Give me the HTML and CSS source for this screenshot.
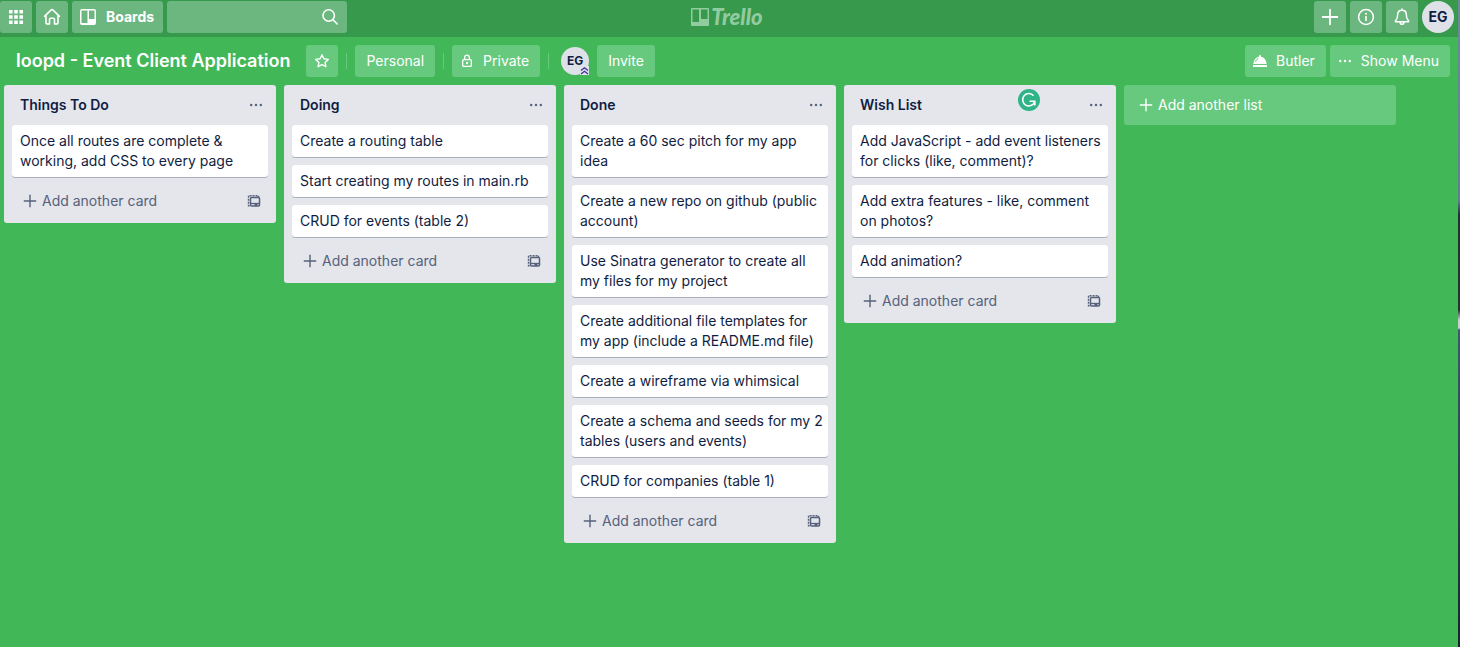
FILE: index.html
```html
<!DOCTYPE html>
<html lang="en">
<head>
<meta charset="utf-8">
<meta name="viewport" content="width=device-width, initial-scale=1">
<title>loopd - Event Client Application | Trello</title>
<link rel="stylesheet" href="styles.css">
</head>
<body>
<svg class="sprite" aria-hidden="true">
  <symbol id="apps" viewBox="0 0 16 16"><path fill="currentColor" d="M1 1h3.600v3.600H1zM6.200 1h3.600v3.600H6.200zM11.400 1H15v3.600h-3.600zM1 6.200h3.600v3.600H1zM6.200 6.200h3.600v3.600H6.200zM11.400 6.200H15v3.600h-3.600zM1 11.400h3.600V15H1zM6.200 11.400h3.600V15H6.200zM11.400 11.400H15V15h-3.600z"/></symbol>
  <symbol id="home" viewBox="0 0 18 18"><path fill="none" stroke="currentColor" stroke-width="1.600" stroke-linejoin="round" stroke-linecap="round" d="M1.500 8.300L8.200 1.900q.8-.7 1.600 0l6.700 6.400M3 7.500v6.700q0 1.800 1.800 1.800h1.700v-4.800q0-1 1-1h3q1 0 1 1V16h1.700q1.800 0 1.800-1.800V7.500"/></symbol>
  <symbol id="board" viewBox="0 0 18 18"><path fill="currentColor" fill-rule="evenodd" d="M3 1h12a2 2 0 0 1 2 2v12a2 2 0 0 1-2 2H3a2 2 0 0 1-2-2V3a2 2 0 0 1 2-2zm-.500 1.500v12.500h6V2.500zm7.500 0v8.500h5.500V2.500z"/></symbol>
  <symbol id="logo" viewBox="0 0 18 18"><path fill="currentColor" fill-rule="evenodd" d="M1 0h16a1 1 0 0 1 1 1v16a1 1 0 0 1-1 1H1a1 1 0 0 1-1-1V1a1 1 0 0 1 1-1zm.500 1.500v12.500h6.500V1.500zm8.500 0v9.500h6.500V1.500z"/></symbol>
  <symbol id="search" viewBox="0 0 18 18"><g fill="none" stroke="currentColor" stroke-width="1.600" stroke-linecap="round"><circle cx="7.700" cy="7.500" r="5.700"/><path d="M12 11.800l4.200 4.200"/></g></symbol>
  <symbol id="plus" viewBox="0 0 16 16"><path fill="none" stroke="currentColor" stroke-width="1.600" stroke-linecap="round" d="M8 1.500v13M1.500 8h13"/></symbol>
  <symbol id="info" viewBox="0 0 18 18"><circle cx="9" cy="9" r="7.400" fill="none" stroke="currentColor" stroke-width="1.500"/><path fill="currentColor" d="M8.200 8h1.600v5H8.200z"/><circle cx="9" cy="5.800" r="1" fill="currentColor"/></symbol>
  <symbol id="bell" viewBox="0 0 18 18"><g fill="none" stroke="currentColor" stroke-width="1.500" stroke-linejoin="round" stroke-linecap="round"><path d="M9 2.200c-2.800 0-4.300 1.900-4.300 4.300 0 3-.4 4.500-1.900 5.900-.8.800-.5 1.400.4 1.400h11.600c.9 0 1.200-.6.400-1.400-1.500-1.400-1.900-2.900-1.900-5.900 0-2.400-1.500-4.300-4.300-4.300zM9 1v1M7.200 14.500q0 1.800 1.800 1.800t1.800-1.800"/></g></symbol>
  <symbol id="star" viewBox="0 0 16 16"><path fill="none" stroke="currentColor" stroke-width="1.400" stroke-linejoin="round" d="M8 1.900l1.900 3.900 4.400.6-3.200 3 .8 4.300L8 11.600l-3.900 2.100.8-4.300-3.200-3 4.400-.6z"/></symbol>
  <symbol id="lock" viewBox="0 0 16 16"><g fill="none" stroke="currentColor" stroke-width="1.300"><rect x="3.700" y="6.700" width="8.600" height="6.700" rx="1"/><path d="M5.700 6.500V4.500a2.300 2.300 0 0 1 4.600 0v2"/></g><circle cx="8" cy="10" r="1.200" fill="currentColor"/></symbol>
  <symbol id="dish" viewBox="0 0 16 16"><path fill="currentColor" d="M1 12h14v2H1zM7 3a1 1 0 0 1 2 0v.7c3.100.5 5.300 3.100 5.600 7.300H1.400C1.700 6.800 3.900 4.200 7 3.700z"/><path fill="none" stroke="#42b757" stroke-width=".9" d="M3.600 8.700C4.200 7 5 6.100 6.300 5.600"/></symbol>
  <symbol id="dots" viewBox="0 0 16 16"><g fill="currentColor"><circle cx="3.200" cy="8" r="1.200"/><circle cx="8" cy="8" r="1.200"/><circle cx="12.800" cy="8" r="1.200"/></g></symbol>
  <symbol id="template" viewBox="0 0 16 16"><g fill="none" stroke="currentColor"><rect x="4.500" y="4.500" width="9" height="8.500" rx="1" stroke-width="1.500"/><path stroke-width="1.300" d="M4.500 10.500h9"/><path stroke-width="1.400" stroke-dasharray="2 1" d="M3.500 12.700H2.500v-10h10v1.300"/></g><path fill="currentColor" d="M8.500 10.500h3v2.500h-3z"/></symbol>
</svg>

<header class="topbar">
  <nav class="group">
    <button class="top-btn square" aria-label="Apps"><svg class="icon16"><use href="#apps"/></svg></button>
    <button class="top-btn square" aria-label="Home"><svg class="icon18"><use href="#home"/></svg></button>
    <button class="top-btn boards"><svg class="icon18"><use href="#board"/></svg>Boards</button>
    <label class="search"><input type="text" aria-label="Search"><svg class="icon18"><use href="#search"/></svg></label>
  </nav>
  <a class="logo" href="#"><svg class="icon18"><use href="#logo"/></svg><span>Trello</span></a>
  <div class="group end">
    <button class="top-btn square" aria-label="Create"><svg class="icon18"><use href="#plus"/></svg></button>
    <button class="top-btn square" aria-label="Information"><svg class="icon18"><use href="#info"/></svg></button>
    <button class="top-btn square" aria-label="Notifications"><svg class="icon18"><use href="#bell"/></svg></button>
    <button class="avatar large">EG</button>
  </div>
</header>

<main>
  <div class="boardbar">
    <h1>loopd - Event Client Application</h1>
    <button class="board-btn square" aria-label="Star board"><svg class="icon16"><use href="#star"/></svg></button>
    <span class="divider"></span>
    <button class="board-btn">Personal</button>
    <span class="divider"></span>
    <button class="board-btn with-icon"><svg class="icon16"><use href="#lock"/></svg>Private</button>
    <span class="divider"></span>
    <button class="avatar member">EG<svg class="badge" viewBox="0 0 9 9"><path fill="#e1e3ea" d="M0 0h9v9H0z"/><path fill="none" stroke="#3a2f9b" stroke-width="1.300" d="M1 4.500l3.500-2.700L8 4.500M1 8l3.500-2.700L8 8"/></svg></button>
    <button class="board-btn">Invite</button>
    <button class="board-btn with-icon butler"><svg class="icon16"><use href="#dish"/></svg>Butler</button>
    <button class="board-btn with-icon"><svg class="icon16"><use href="#dots"/></svg>Show Menu</button>
  </div>

  <div class="lists">
    <section class="list">
      <header><h2>Things To Do</h2><button class="plain" aria-label="List actions"><svg class="icon16"><use href="#dots"/></svg></button></header>
      <ul>
        <li>Once all routes are complete &amp; working, add CSS to every page</li>
      </ul>
      <footer><button class="plain add"><svg class="icon14"><use href="#plus"/></svg>Add another card</button><button class="plain" aria-label="Create from template"><svg class="icon16"><use href="#template"/></svg></button></footer>
    </section>
    <section class="list">
      <header><h2>Doing</h2><button class="plain" aria-label="List actions"><svg class="icon16"><use href="#dots"/></svg></button></header>
      <ul>
        <li>Create a routing table</li>
        <li>Start creating my routes in main.rb</li>
        <li>CRUD for events (table 2)</li>
      </ul>
      <footer><button class="plain add"><svg class="icon14"><use href="#plus"/></svg>Add another card</button><button class="plain" aria-label="Create from template"><svg class="icon16"><use href="#template"/></svg></button></footer>
    </section>
    <section class="list">
      <header><h2>Done</h2><button class="plain" aria-label="List actions"><svg class="icon16"><use href="#dots"/></svg></button></header>
      <ul>
        <li>Create a 60 sec pitch for my app idea</li>
        <li>Create a new repo on github (public account)</li>
        <li>Use Sinatra generator to create all my files for my project</li>
        <li>Create additional file templates for my app (include a README.md file)</li>
        <li>Create a wireframe via whimsical</li>
        <li>Create a schema and seeds for my 2 tables (users and events)</li>
        <li>CRUD for companies (table 1)</li>
      </ul>
      <footer><button class="plain add"><svg class="icon14"><use href="#plus"/></svg>Add another card</button><button class="plain" aria-label="Create from template"><svg class="icon16"><use href="#template"/></svg></button></footer>
    </section>
    <section class="list">
      <header><h2>Wish List</h2><button class="plain" aria-label="List actions"><svg class="icon16"><use href="#dots"/></svg></button></header>
      <svg class="grammar" viewBox="0 0 22 22"><circle cx="11" cy="11" r="11" fill="#2fb487"/><path fill="none" stroke="#fff" stroke-width="1.600" d="M15.600 6.800A6.200 6.200 0 1 0 16.600 13M11.500 12.200h5.300v4.300"/></svg>
      <ul>
        <li>Add JavaScript - add event listeners for clicks (like, comment)?</li>
        <li>Add extra features - like, comment on photos?</li>
        <li>Add animation?</li>
      </ul>
      <footer><button class="plain add"><svg class="icon14"><use href="#plus"/></svg>Add another card</button><button class="plain" aria-label="Create from template"><svg class="icon16"><use href="#template"/></svg></button></footer>
    </section>
    <button class="add-list"><svg class="icon14"><use href="#plus"/></svg>Add another list</button>
  </div>
</main>
</body>
</html>
```
FILE: styles.css
```css
* {
  box-sizing: border-box;
}

html {
  min-height: 100%;
  background: linear-gradient(#6d8a9a 0, #5f8090 200px, #1f3030 215px, #26352c 310px, #c9d0d0 320px, #c9d0d0 328px, #3c5a68 330px, #17252b 100%);
}

body {
  margin: 0;
  margin-right: 2px;
  min-height: 100vh;
  background: #42b757;
  color: #101d42;
  font: 14px/20px Inter, "Liberation Sans", sans-serif;
}

button,
input {
  border: 0;
  margin: 0;
  padding: 0;
  font: inherit;
  color: inherit;
  background: none;
}

button {
  cursor: pointer;
  white-space: nowrap;
}

svg {
  display: block;
  flex: none;
}

.sprite {
  position: absolute;
  width: 0;
  height: 0;
}

.icon14 { width: 14px; height: 14px; }
.icon16 { width: 16px; height: 16px; }
.icon18 { width: 18px; height: 18px; }

.topbar {
  display: grid;
  grid-template-columns: 1fr auto 1fr;
  height: 37px;
  padding: 1px 4px 4px 0;
  background: #37994b;
  color: #fff;
}

.group {
  display: flex;
  gap: 4px;
}

.end {
  justify-content: flex-end;
}

.top-btn {
  display: flex;
  align-items: center;
  justify-content: center;
  height: 32px;
  border-radius: 3px;
  background: #6cb77f;
}

.square.square {
  width: 32px;
  padding: 0;
}

.boards {
  gap: 9px;
  padding: 0 9px 0 7px;
  font-weight: 700;
}

.search {
  display: flex;
  align-items: center;
  width: 180px;
  height: 32px;
  padding: 0 8px;
  border-radius: 3px;
  background: #6cb77f;
}

.search input {
  flex: 1;
  min-width: 0;
  outline: 0;
}

.logo {
  display: flex;
  align-items: center;
  gap: 2px;
  height: 32px;
  color: #93cba0;
  text-decoration: none;
  font: italic 900 22px/32px Lato, sans-serif;
}

.avatar {
  position: relative;
  flex: none;
  border-radius: 50%;
  background: #dfe1e8;
  color: #101d42;
  font-weight: 700;
}

.large {
  width: 32px;
  height: 32px;
}

.member {
  width: 28px;
  height: 28px;
  margin-left: 4px;
  font-size: 12px;
}

.badge {
  position: absolute;
  right: 0;
  bottom: 0;
  width: 9px;
  height: 9px;
}

.boardbar {
  display: flex;
  align-items: center;
  gap: 8px;
  padding: 8px 8px 8px 16px;
  color: #fff;
}

h1 {
  margin: 0 8px 0 0;
  font-size: 18px;
  line-height: 32px;
  font-weight: 600;
  white-space: nowrap;
}

.board-btn {
  display: flex;
  align-items: center;
  justify-content: center;
  height: 32px;
  padding: 0 11px;
  border-radius: 3px;
  background: #67c97e;
}

.with-icon {
  gap: 8px;
  padding: 0 11px 0 7px;
}

.divider {
  width: 1px;
  height: 16px;
  background: #67c97e;
}

.butler {
  margin-left: auto;
  margin-right: -4px;
}

.lists {
  display: flex;
  align-items: flex-start;
  gap: 8px;
  padding: 0 4px 8px;
}

.list {
  position: relative;
  flex: 0 0 272px;
  padding: 0 8px 6px;
  border-radius: 3px;
  background: #e4e6ec;
}

.list header,
.list footer {
  display: flex;
  align-items: center;
  justify-content: space-between;
}

.list header {
  height: 40px;
  padding: 0 4px 0 8px;
}

.list footer {
  height: 32px;
  margin-top: 8px;
  padding: 0 6px 0 11px;
}

h2 {
  margin: 0;
  font-size: 14px;
  line-height: 20px;
  font-weight: 600;
}

.list ul {
  display: grid;
  gap: 8px;
  margin: 0;
  padding: 0;
  list-style: none;
}

.list li {
  padding: 6px 4px 6px 8px;
  border-radius: 3px;
  background: #fff;
  box-shadow: 0 1px 0 #aab0bd;
}

.plain {
  color: #56617a;
}

.add,
.add-list {
  display: flex;
  align-items: center;
  gap: 5px;
}

.grammar {
  position: absolute;
  top: 4px;
  right: 76px;
  width: 22px;
  height: 22px;
}

.add-list {
  flex: 0 0 272px;
  height: 40px;
  padding: 0 15px;
  border-radius: 3px;
  background: #67c97e;
  color: #fff;
}
```
